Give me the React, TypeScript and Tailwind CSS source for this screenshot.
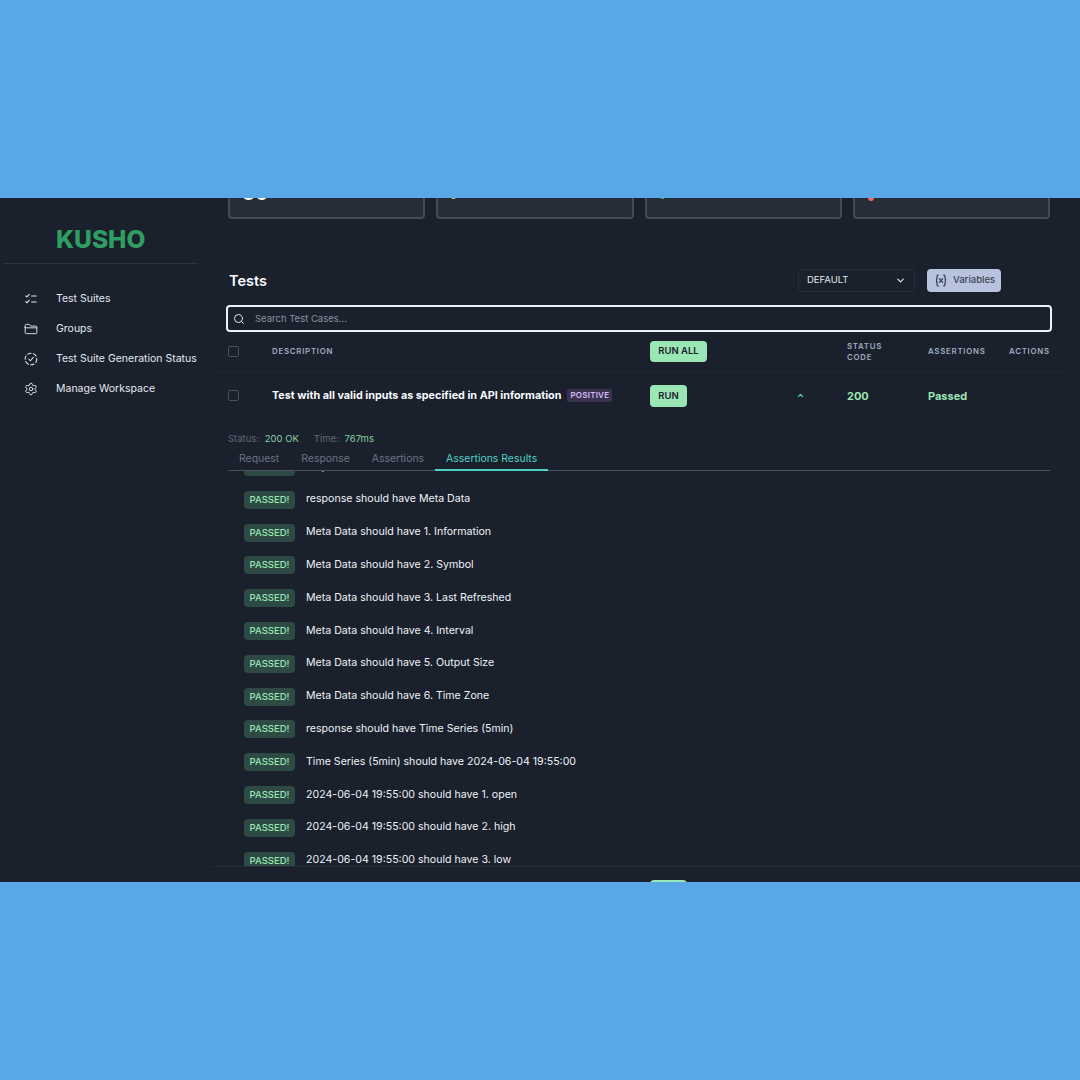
import React from 'react';
import { ChevronDown, ChevronUp, Search, Settings } from 'lucide-react';

const results = [
  'response status code should be 200',
  'response should have Meta Data',
  'Meta Data should have 1. Information',
  'Meta Data should have 2. Symbol',
  'Meta Data should have 3. Last Refreshed',
  'Meta Data should have 4. Interval',
  'Meta Data should have 5. Output Size',
  'Meta Data should have 6. Time Zone',
  'response should have Time Series (5min)',
  'Time Series (5min) should have 2024-06-04 19:55:00',
  '2024-06-04 19:55:00 should have 1. open',
  '2024-06-04 19:55:00 should have 2. high',
  '2024-06-04 19:55:00 should have 3. low',
];

const ChecksIcon = () => (
  <svg width="14" height="14" viewBox="0 0 24 24" fill="none" stroke="currentColor" strokeWidth="1.8" strokeLinecap="round" strokeLinejoin="round">
    <path d="M3 6.5l2 2 4-4.5" />
    <path d="M3 16.500l2 2 4-4.500" />
    <path d="M13 7h8" />
    <path d="M13 17h8" />
  </svg>
);

const FolderIcon = () => (
  <svg width="14" height="14" viewBox="0 0 24 24" fill="none" stroke="currentColor" strokeWidth="1.6" strokeLinecap="round" strokeLinejoin="round">
    <path d="M2 9V6a2 2 0 0 1 2-2h5l2.5 3H20a2 2 0 0 1 2 2v9a2 2 0 0 1-2 2H4a2 2 0 0 1-2-2V9z" />
    <path d="M2 10h20" />
  </svg>
);

const DashedCheckIcon = () => (
  <svg width="14" height="14" viewBox="0 0 24 24" fill="none" stroke="currentColor" strokeWidth="1.8" strokeLinecap="round" strokeLinejoin="round">
    <circle cx="12" cy="12" r="10" strokeDasharray="6 4" />
    <path d="M8 12l3 3 5-6" />
  </svg>
);

const VariableIcon = () => (
  <svg width="12" height="13" viewBox="0 0 20 24" fill="none" stroke="currentColor" strokeWidth="2.4" strokeLinecap="round" strokeLinejoin="round">
    <path d="M5 2H3.500C1.500 8 1.500 16 3.500 22H5" />
    <path d="M15 2h1.500c2 6 2 14 0 20H15" />
    <path d="M7 8.500l6 7" />
    <path d="M13 8.500l-6 7" />
  </svg>
);

const navItems = [
  { label: 'Test Suites', icon: <ChecksIcon /> },
  { label: 'Groups', icon: <FolderIcon /> },
  { label: 'Test Suite Generation Status', icon: <DashedCheckIcon /> },
  { label: 'Manage Workspace', icon: <Settings size={14} strokeWidth={1.6} /> },
];

const Checkbox = () => <div className="w-[11px] h-[11px] -mt-px rounded-[2px] border border-[#4a505c]" />;

const tableCols = 'grid grid-cols-[44px_378px_197px_81px_81px_1fr] items-center';

export default function App() {
  return (
    <div className="w-[1080px] h-[1080px] bg-[#5aa7e8] flex items-center overflow-hidden font-['Inter',sans-serif]">
      <div className="w-full h-[684px] bg-[#1a202c] flex overflow-hidden">
        {/* Sidebar */}
        <aside className="w-[212px] shrink-0 pl-1">
          <div className="w-[194px] h-[66px] border-b border-[#2d3342] flex items-end pb-[9px] pl-[52px]">
            <span className="text-[24.5px] leading-[30px] font-extrabold text-[#2f9e62]">KUSHO</span>
          </div>
          <nav className="mt-5 flex flex-col">
            {navItems.map(item => (
              <div key={item.label} className="h-[30px] flex items-center text-[#e2e8f0]">
                <span className="w-[52px] pl-[20px] flex items-center">{item.icon}</span>
                <span className="text-[10.5px] whitespace-nowrap">{item.label}</span>
              </div>
            ))}
          </nav>
        </aside>

        {/* Main */}
        <main className="flex-1 min-w-0 pl-4 pr-[30px] flex flex-col">
          <div className="grid grid-cols-4 gap-[11px] -mt-[39px] h-[60px] shrink-0">
            <div className="relative rounded-[4px] border-2 border-[#454a55] bg-[#262c38]">
              <span className="absolute left-[12px] top-[20px] text-[20px] leading-[24px] font-bold text-white">30</span>
            </div>
            <div className="relative rounded-[4px] border-2 border-[#454a55] bg-[#262c38]">
              <span className="absolute left-[13px] top-[33px] w-[5px] h-[5px] rounded-full bg-[#ecc94b]" />
            </div>
            <div className="relative rounded-[4px] border-2 border-[#454a55] bg-[#262c38]">
              <span className="absolute left-[13px] top-[33px] w-[5px] h-[5px] rounded-full bg-[#48bb78]" />
            </div>
            <div className="relative rounded-[4px] border-2 border-[#454a55] bg-[#262c38]">
              <span className="absolute left-[13px] top-[34px] w-[6px] h-[6px] rounded-full bg-[#f56565]" />
            </div>
          </div>

          <div className="mt-[50px] h-[23px] flex items-center justify-between shrink-0 pr-[49px]">
            <h2 className="text-[14.5px] font-semibold text-[#f7fafc] pl-px">Tests</h2>
            <div className="flex items-center gap-3">
              <div className="w-[117px] h-[23px] rounded-[3px] border border-[#262c39] flex items-center justify-between px-2 text-[9.5px] text-[#e2e8f0]">
                DEFAULT
                <ChevronDown size={11} strokeWidth={2.5} />
              </div>
              <div className="w-[74px] h-[23px] rounded-[4px] bg-[#b8c4de] flex items-center gap-[6px] pl-[8px] text-[9.5px] font-medium text-[#3a4152]">
                <VariableIcon />
                Variables
              </div>
            </div>
          </div>

          <div className="mt-[13px] h-[27px] -mx-[2px] shrink-0 rounded-[4px] border-2 border-[#edf2f7] flex items-center pl-[5px] gap-[10px]">
            <Search size={12} strokeWidth={2} className="text-[#e2e8f0]" />
            <span className="pt-[2px] text-[9.5px] text-[#8a91a0]">Search Test Cases...</span>
          </div>

          <div className="h-[40px] shrink-0 -ml-4 -mr-[15px] pl-4 border-b border-[#222836]">
            <div className={`${tableCols} h-[39px] text-[7.8px] font-semibold tracking-[0.1em] text-[#a0aec0]`}>
              <Checkbox />
              <span>DESCRIPTION</span>
              <span>
                <button className="h-[21px] w-[57px] rounded-[4px] bg-[#9ae6b4] text-[9.5px] font-semibold tracking-normal text-[#1a202c]">RUN ALL</button>
              </span>
              <span className="leading-[11px]">STATUS<br />CODE</span>
              <span>ASSERTIONS</span>
              <span>ACTIONS</span>
            </div>
          </div>

          <div className={`${tableCols} h-[47px] shrink-0`}>
            <Checkbox />
            <div className="flex items-center gap-[6px] whitespace-nowrap">
              <span className="pt-[2px] text-[10.8px] font-bold text-[#f7fafc]">Test with all valid inputs as specified in API information</span>
              <span className="h-[13px] px-[3px] rounded-[2px] bg-[#3a3350] text-[8px] leading-[13px] font-semibold tracking-[0.03em] text-[#d6bcfa]">POSITIVE</span>
            </div>
            <div className="flex items-center justify-between pr-[42px]">
              <button className="h-[22px] w-[37px] pt-px rounded-[4px] bg-[#9ae6b4] text-[9.5px] font-semibold text-[#1a202c]">RUN</button>
              <ChevronUp size={9} strokeWidth={3} className="text-[#4fd1c5]" />
            </div>
            <span className="pt-px text-[11px] font-bold text-[#9ae6b4]">200</span>
            <span className="pt-px text-[11px] font-bold text-[#9ae6b4]">Passed</span>
            <span />
          </div>

          <div className="mt-[15px] h-[10px] flex items-center gap-[15px] text-[9.5px] shrink-0">
            <span className="text-[#5f6876]">Status: <span className="ml-[3px] text-[#86d0a4]">200 OK</span></span>
            <span className="text-[#5f6876]">Time: <span className="ml-[3px] text-[#86d0a4]">767ms</span></span>
          </div>

          <div className="mt-[3px] h-[24px] shrink-0 flex border-b border-[#4a505c] text-[10.45px] text-[#6b7483]">
            <span className="px-[11px] pt-[4px]">Request</span>
            <span className="px-[11px] pt-[4px]">Response</span>
            <span className="px-[11px] pt-[4px]">Assertions</span>
            <span className="h-[24px] px-[11px] pt-[4px] border-b-2 border-[#4fd1c5] text-[#4fd1c5]">Assertions Results</span>
          </div>

          <div className="h-[396px] shrink-0 -ml-4 -mr-[30px] border-b border-[#262c39] overflow-hidden">
            <div className="-mt-[13px] pl-8 flex flex-col gap-[14.8px]">
              {results.map((text, i) => (
                <div key={i} className="h-[18px] shrink-0 flex items-center gap-[11px]">
                  <span className="w-[51px] h-[18px] rounded-[4px] bg-[#2d4a45] text-center text-[9.5px] leading-[18px] font-medium text-[#9ae6b4]">PASSED!</span>
                  <span className="text-[10.6px] text-[#edf2f7] whitespace-nowrap -mt-px">{text}</span>
                </div>
              ))}
            </div>
          </div>

          <div className="pt-[13px] pl-[422px] shrink-0">
            <div className="w-[37px] h-[22px] rounded-[4px] bg-[#9ae6b4]" />
          </div>
        </main>
      </div>
    </div>
  );
}
